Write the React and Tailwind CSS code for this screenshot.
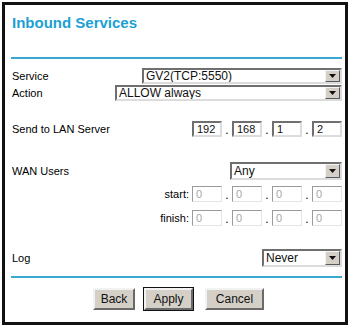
import React from "react";

const font = { fontFamily: '"Liberation Sans", Arial, sans-serif' };

const Arrow = () => (
  <div className="w-[15px] h-full bg-[#d4d0c8] border border-t-[#f4f4f4] border-l-[#f4f4f4] border-b-[#5a5a5a] border-r-[#5a5a5a] flex items-center justify-center">
    <svg width="7" height="4" viewBox="0 0 7 4">
      <path d="M0 0h7L3.5 4z" fill="#111" />
    </svg>
  </div>
);

const Select = ({ value, className }) => (
  <div
    className={
      "flex items-stretch bg-white border-2 border-t-[#6f6f6f] border-l-[#6f6f6f] border-b-[#dcdcdc] border-r-[#dcdcdc] " +
      className
    }
  >
    <div className="flex-1 flex items-center pl-[2px] text-[12px] leading-none text-[#111] overflow-hidden whitespace-nowrap">
      {value}
    </div>
    <Arrow />
  </div>
);

const IpBox = ({ value, disabled }) => (
  <div
    className={
      "w-[30px] h-full flex items-center pl-[3px] text-[11px] leading-none border " +
      (disabled
        ? "border-t-[#9a9a9a] border-l-[#9a9a9a] border-b-[#e4e4e4] border-r-[#e4e4e4] text-[#a8a8a8]"
        : "border-2 border-t-[#6f6f6f] border-l-[#6f6f6f] border-b-[#dcdcdc] border-r-[#dcdcdc] text-[#111]")
    }
  >
    {value}
  </div>
);

const Ip = ({ values, disabled }) => (
  <div className="flex items-stretch h-full">
    {values.map((v, i) => (
      <React.Fragment key={i}>
        {i > 0 && (
          <div className="w-[10px] flex items-end justify-center pb-[1px] text-[12px] leading-none">.</div>
        )}
        <IpBox value={v} disabled={disabled} />
      </React.Fragment>
    ))}
  </div>
);

const Button = ({ children, className }) => (
  <button
    className={
      "h-[22px] bg-[#d4d0c8] text-[12px] text-[#111] border-2 border-t-[#f2f2f2] border-l-[#f2f2f2] border-b-[#6a6a6a] border-r-[#6a6a6a] " +
      className
    }
  >
    {children}
  </button>
);

export default function App() {
  return (
    <div className="w-[350px] h-[328px] bg-white pt-[2px] pl-[2px]" style={font}>
      <div className="w-[346px] h-[323px] border-[3px] border-[#111] flex flex-col pl-[6px] pr-[3px]">
        <h1 className="mt-[9px] ml-[1px] text-[15px] leading-[18px] font-bold text-[#1c9fd2]">
          Inbound Services
        </h1>
        <div className="mt-[25px] h-[2px] bg-[#3ba8cf]" />

        <div className="mt-[9px] h-[16px] flex items-center justify-between text-[11px]">
          <span className="ml-[1px]">Service</span>
          <Select value="GV2(TCP:5550)" className="w-[200px] h-full" />
        </div>
        <div className="mt-[1px] h-[16px] flex items-center justify-between text-[11px]">
          <span className="ml-[1px]">Action</span>
          <Select value="ALLOW always" className="w-[227px] h-full" />
        </div>

        <div className="mt-[20px] h-[16px] flex items-center justify-between text-[11px]">
          <span className="ml-[1px]">Send to LAN Server</span>
          <Ip values={["192", "168", "1", "2"]} />
        </div>

        <div className="mt-[25px] h-[18px] flex items-center justify-between text-[11px]">
          <span className="ml-[1px]">WAN Users</span>
          <Select value="Any" className="w-[112px] h-full" />
        </div>
        <div className="mt-[6px] h-[16px] flex items-center justify-end text-[11px]">
          <span className="mr-[3px]">start:</span>
          <Ip values={["0", "0", "0", "0"]} disabled />
        </div>
        <div className="mt-[8px] h-[16px] flex items-center justify-end text-[11px]">
          <span className="mr-[3px]">finish:</span>
          <Ip values={["0", "0", "0", "0"]} disabled />
        </div>

        <div className="mt-[23px] h-[18px] flex items-center justify-between text-[11px]">
          <span className="ml-[1px]">Log</span>
          <Select value="Never" className="w-[80px] h-full" />
        </div>

        <div className="mt-[9px] h-[2px] bg-[#3ba8cf]" />

        <div className="mt-[10px] flex justify-center pl-[4px]">
          <Button className="w-[42px]">Back</Button>
          <Button className="ml-[9px] w-[49px] outline outline-1 outline-[#111]">Apply</Button>
          <Button className="ml-[12px] w-[59px]">Cancel</Button>
        </div>
      </div>
    </div>
  );
}
